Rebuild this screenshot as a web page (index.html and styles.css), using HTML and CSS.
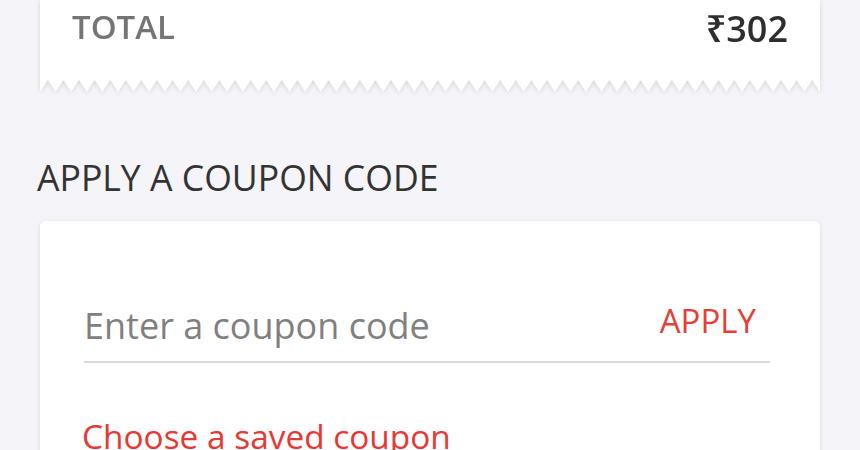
FILE: index.html
```html
<!DOCTYPE html>
<html lang="en">

<head>
    <meta charset="UTF-8">
    <meta name="viewport" content="width=device-width, initial-scale=1.0">
    <title>Cart</title>
    <link rel="stylesheet" href="styles.css">
</head>

<body>
    <div class="page">
        <div class="bill">
            <div class="bill-body">
                <span class="total-label">TOTAL</span>
                <span class="total-value">₹302</span>
            </div>
            <svg class="bill-edge" viewBox="0 0 780 12" preserveAspectRatio="none">
                <defs>
                    <pattern id="zigzag" x="-7.8" width="15.6" height="12" patternUnits="userSpaceOnUse">
                        <path d="M0 0H15.6L7.8 12Z" fill="#fff"/>
                    </pattern>
                </defs>
                <rect width="780" height="12" fill="url(#zigzag)"/>
            </svg>
        </div>

        <h2 class="section-title">APPLY A COUPON CODE</h2>

        <div class="coupon-card">
            <div class="coupon-field">
                <input type="text" class="coupon-input" placeholder="Enter a coupon code">
                <button type="button" class="apply-btn">APPLY</button>
            </div>
            <a href="#" class="saved-link">Choose a saved coupon</a>
        </div>
    </div>
</body>

</html>
```

FILE: styles.css
```css
body {
    font-family: 'Open Sans', 'Noto Sans', sans-serif;
    background: #f5f4f8;
    margin: 0;
    padding: 0;
    color: #333;
    overflow: hidden;
}

.page {
    padding: 0 40px;
}

.bill {
    filter: drop-shadow(0 1px 2px rgba(0, 0, 0, 0.14));
}

.bill-body {
    display: flex;
    justify-content: space-between;
    align-items: flex-start;
    background: #fff;
    padding: 4px 32px 0 32px;
    height: 76px;
}

.total-label {
    font-size: 33px;
    font-weight: 600;
    color: #757575;
}

.total-value {
    font-size: 36px;
    font-weight: 600;
    color: #2e2e2e;
}

.bill-edge {
    display: block;
    width: 100%;
    height: 12px;
}

.section-title {
    font-size: 35.6px;
    font-weight: 400;
    color: #333;
    margin: 61px 0 20px -3px;
}

.coupon-card {
    background: #fff;
    border-radius: 5px;
    box-shadow: 0 1px 4px rgba(0, 0, 0, 0.12);
    padding: 77px 50px 40px 44px;
}

.coupon-field {
    display: flex;
    align-items: center;
    border-bottom: 2px solid #ddd7e1;
    padding-bottom: 8px;
}

.coupon-input {
    flex: 1;
    border: none;
    outline: none;
    padding: 0;
    font-family: inherit;
    font-size: 36px;
    color: #333;
    background: transparent;
}

.coupon-input::placeholder {
    color: #808080;
}

.apply-btn {
    border: none;
    background: none;
    padding: 0 14px 10px 0;
    font-family: inherit;
    font-size: 33px;
    color: #e53f37;
    cursor: pointer;
}

.saved-link {
    display: block;
    margin-top: 50px;
    margin-left: -2px;
    font-size: 33.4px;
    color: #e53935;
    text-decoration: none;
}
```
